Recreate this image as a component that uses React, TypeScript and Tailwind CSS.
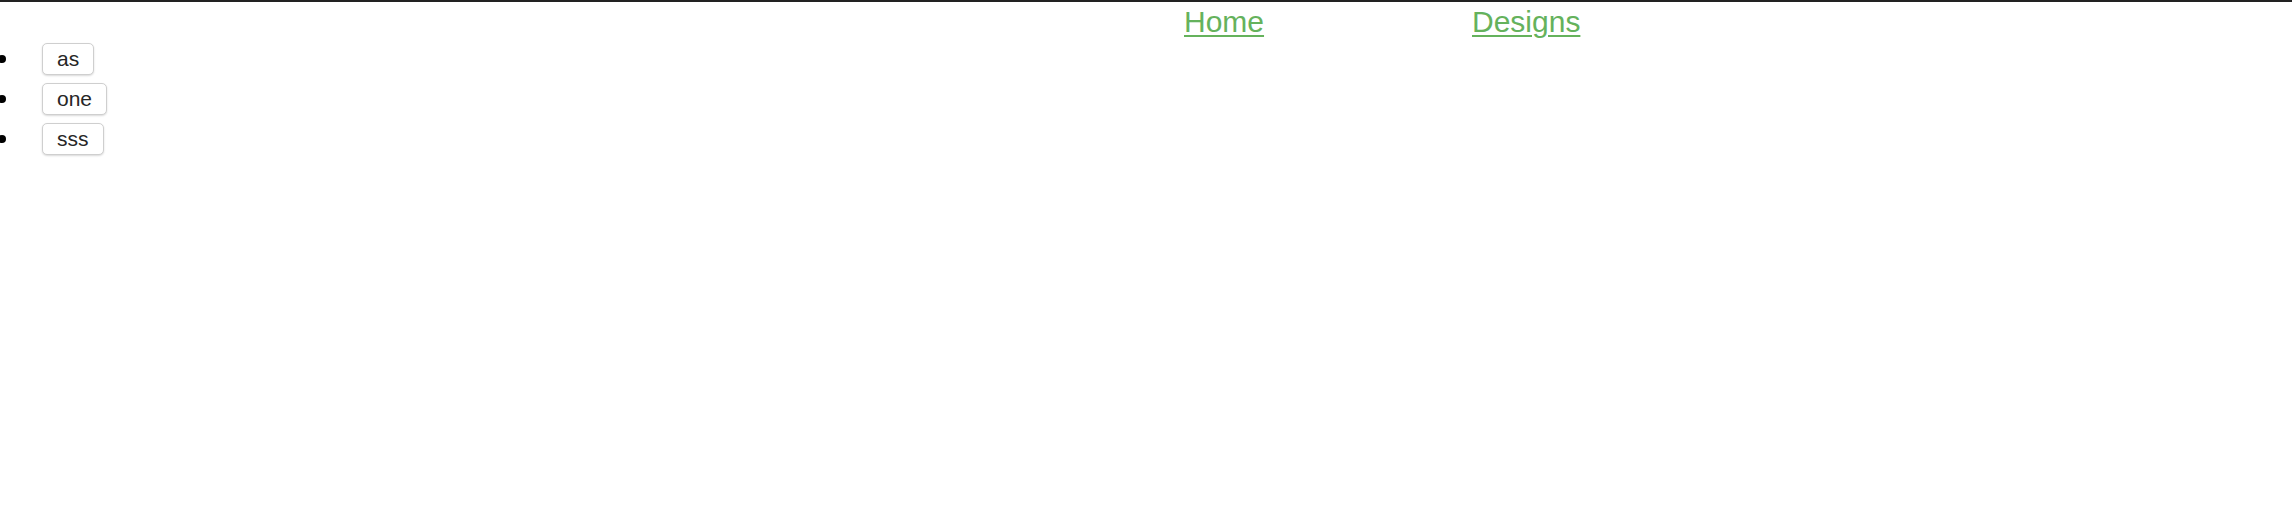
const items = ['as', 'one', 'sss'];

export default function App() {
  return (
    <div className="min-h-screen bg-white border-t-2 border-[#222222] font-['Liberation_Sans',Arial,sans-serif]">
      {/* top nav */}
      <nav className="flex pl-[1184px] pt-[2px] text-[30px] leading-[36px] text-[#65b25c]">
        <a href="#" className="w-[288px] underline decoration-2 underline-offset-[3px]">Home</a>
        <a href="#" className="underline decoration-2 underline-offset-[3px]">Designs</a>
      </nav>

      {/* items */}
      <ul className="mt-[3px] flex flex-col gap-[8px] text-[21px]">
        {items.map((item) => (
          <li key={item} className="flex items-center">
            <span className="-ml-[2px] w-[8px] h-[8px] rounded-full bg-black" />
            <button className="ml-[36px] h-[32px] px-[14px] bg-white border border-[#cfcfcf] rounded-[5px] shadow-[0_1px_2px_rgba(0,0,0,0.15)] leading-[30px] text-[#262626]">
              {item}
            </button>
          </li>
        ))}
      </ul>
    </div>
  );
}
